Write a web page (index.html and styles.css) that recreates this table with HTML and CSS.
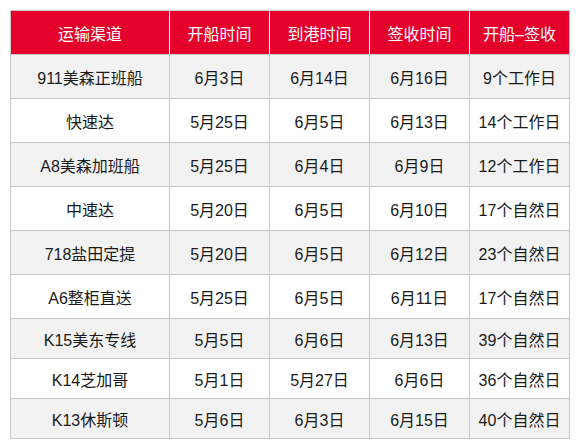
FILE: index.html
```html
<!DOCTYPE html>
<html lang="zh-CN">
<head>
<meta charset="utf-8">
<link rel="stylesheet" href="styles.css">
</head>
<body>
<table class="ship">
  <colgroup>
    <col class="c-name"><col class="c-d"><col class="c-d"><col class="c-d"><col class="c-d">
  </colgroup>
  <thead>
    <tr class="head"><th>运输渠道</th><th>开船时间</th><th>到港时间</th><th>签收时间</th><th>开船–签收</th></tr>
  </thead>
  <tbody>
    <tr class="alt tall"><td>911美森正班船</td><td>6月3日</td><td>6月14日</td><td>6月16日</td><td>9个工作日</td></tr>
    <tr class="tall"><td>快速达</td><td>5月25日</td><td>6月5日</td><td>6月13日</td><td>14个工作日</td></tr>
    <tr class="alt tall"><td>A8美森加班船</td><td>5月25日</td><td>6月4日</td><td>6月9日</td><td>12个工作日</td></tr>
    <tr class="tall"><td>中速达</td><td>5月20日</td><td>6月5日</td><td>6月10日</td><td>17个自然日</td></tr>
    <tr class="alt tall"><td>718盐田定提</td><td>5月20日</td><td>6月5日</td><td>6月12日</td><td>23个自然日</td></tr>
    <tr class="tall"><td>A6整柜直送</td><td>5月25日</td><td>6月5日</td><td>6月11日</td><td>17个自然日</td></tr>
    <tr class="alt short"><td>K15美东专线</td><td>5月5日</td><td>6月6日</td><td>6月13日</td><td>39个自然日</td></tr>
    <tr class="short"><td>K14芝加哥</td><td>5月1日</td><td>5月27日</td><td>6月6日</td><td>36个自然日</td></tr>
    <tr class="alt short"><td>K13休斯顿</td><td>5月6日</td><td>6月3日</td><td>6月15日</td><td>40个自然日</td></tr>
  </tbody>
</table>
</body>
</html>
```
FILE: styles.css
```css
html, body {
  margin: 0;
  background: #ffffff;
}
body {
  padding: 10px;
  font-family: "Liberation Sans", Arial, "Noto Sans CJK SC", sans-serif;
  font-size: 16px;
  color: #1a1a1a;
}
.ship {
  border-collapse: collapse;
  table-layout: fixed;
  width: 560px;
}
.c-name { width: 159px; }
.c-d { width: 100px; }
.ship th, .ship td {
  padding: 0;
  text-align: center;
  vertical-align: middle;
  border: 1px solid #c8c8c8;
  white-space: nowrap;
}
.head {
  height: 44px;
}
.head th {
  background: #e4002b;
  color: #ffffff;
  font-weight: normal;
  border-left-color: #ffffff;
  border-right-color: #ffffff;
}
.head th:first-child { border-left-color: #c8c8c8; }
.head th:last-child { border-right-color: #c8c8c8; }
.tall { height: 44px; }
.short { height: 40px; }
.alt td { background: #f2f2f2; }
```
